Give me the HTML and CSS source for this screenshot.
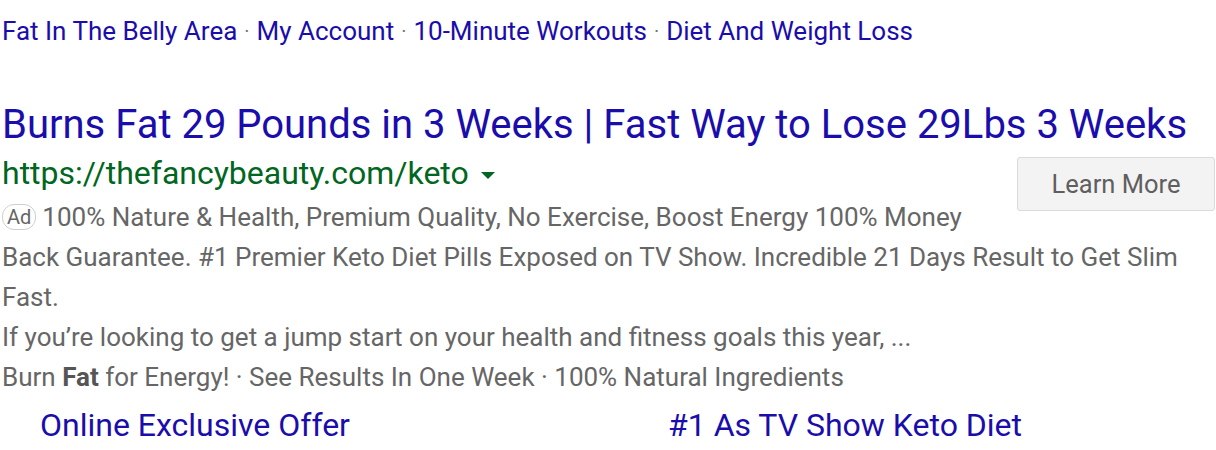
FILE: index.html
```html
<!DOCTYPE html>
<html>
<head>
<meta charset="utf-8">
<link rel="stylesheet" href="styles.css">
</head>
<body>
<div class="page">
  <nav class="crumbs">
    <a href="#">Fat In The Belly Area</a><span class="dot">·</span><a href="#">My Account</a><span class="dot">·</span><a href="#">10-Minute Workouts</a><span class="dot">·</span><a href="#">Diet And Weight Loss</a>
  </nav>
  <h3 class="title"><a href="#">Burns Fat 29 Pounds in 3 Weeks | Fast Way to Lose 29Lbs 3 Weeks</a></h3>
  <div class="ad-body">
    <button class="learn">Learn More</button>
    <div class="url-row">
      <span class="url">https://thefancybeauty.com/keto</span>
      <span class="caret"></span>
    </div>
    <p class="desc"><span class="badge">Ad</span>100% Nature &amp; Health, Premium Quality, No Exercise, Boost Energy 100% Money Back Guarantee. #1 Premier Keto Diet Pills Exposed on TV Show. Incredible 21 Days Result to Get Slim Fast.</p>
    <p class="desc">If you’re looking to get a jump start on your health and fitness goals this year, ...</p>
    <p class="desc">Burn <b>Fat</b> for Energy! · See Results In One Week · 100% Natural Ingredients</p>
  </div>
  <div class="sitelinks">
    <a href="#">Online Exclusive Offer</a>
    <a href="#">#1 As TV Show Keto Diet</a>
  </div>
</div>
</body>
</html>
```
FILE: styles.css
```css
* { box-sizing: border-box; }
body {
  margin: 0;
  background: #fff;
  font-family: Roboto, Arial, sans-serif;
}
a { color: #1a0dab; text-decoration: none; }
.page { padding: 14px 0 0 2px; width: 1216px; }
.crumbs {
  font-size: 26px;
  line-height: 34px;
  display: flex;
  align-items: center;
}
.crumbs .dot { color: #70757a; margin: 0 7px; font-size: 20px; }
.title {
  margin: 53px 0 0;
  font-weight: 400;
  font-size: 40px;
  line-height: 48px;
  white-space: nowrap;
}
.ad-body { display: flow-root; }
.url-row { display: flex; align-items: center; height: 48px; }
.url { color: #006621; font-size: 32px; }
.caret {
  width: 0; height: 0;
  border-left: 7px solid transparent;
  border-right: 7px solid transparent;
  border-top: 7px solid #006621;
  margin-left: 12px;
  margin-top: 4px;
}
.desc {
  margin: 0;
  color: #666;
  font-size: 26px;
  line-height: 40px;
}
.desc b { color: #555; }
.badge {
  display: inline-block;
  vertical-align: 2px;
  border: 1px solid #cfcfcf;
  border-radius: 12px;
  font-size: 20px;
  line-height: 24px;
  padding: 0 4px;
  margin-right: 6px;
}
.learn {
  float: right;
  margin: 8px 1px 0 24px;
  width: 198px;
  height: 54px;
  background: #f3f3f3;
  border: 1px solid #dadada;
  border-radius: 3px;
  font-family: Roboto, Arial, sans-serif;
  font-size: 25.5px;
  color: #5f5f5f;
}
.sitelinks {
  display: grid;
  grid-template-columns: 628px 1fr;
  padding-left: 38px;
  margin-top: 8px;
  font-size: 32px;
  line-height: 40px;
}
```
